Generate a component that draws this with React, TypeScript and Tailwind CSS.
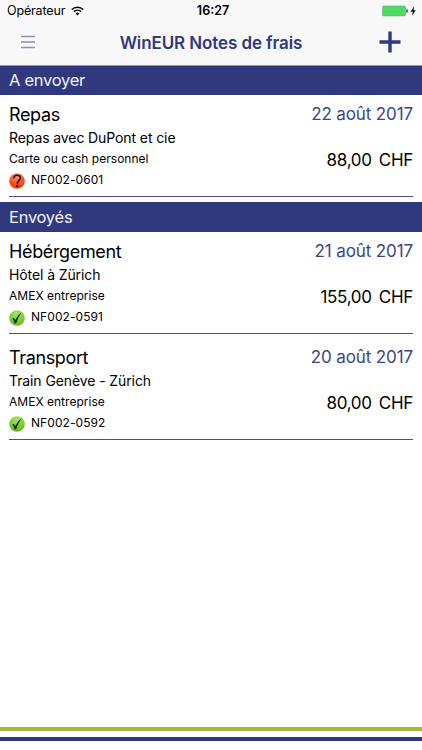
import { ReactNode } from 'react'

type ExpenseStatus = 'pending' | 'sent'

interface Expense {
  id: string
  category: string
  description: string
  payment: string
  date: string
  amount: string
  status: ExpenseStatus
}

const pendingExpenses: Expense[] = [
  {
    id: 'NF002-0601',
    category: 'Repas',
    description: 'Repas avec DuPont et cie',
    payment: 'Carte ou cash personnel',
    date: '22 août 2017',
    amount: '88,00 CHF',
    status: 'pending',
  },
]

const sentExpenses: Expense[] = [
  {
    id: 'NF002-0591',
    category: 'Hébérgement',
    description: 'Hôtel à Zürich',
    payment: 'AMEX entreprise',
    date: '21 août 2017',
    amount: '155,00 CHF',
    status: 'sent',
  },
  {
    id: 'NF002-0592',
    category: 'Transport',
    description: 'Train Genève - Zürich',
    payment: 'AMEX entreprise',
    date: '20 août 2017',
    amount: '80,00 CHF',
    status: 'sent',
  },
]

function StatusBar() {
  return (
    <div className="grid h-[22px] grid-cols-3 items-center text-[12.5px] leading-[22px] text-black">
      <div className="flex items-center gap-[6px] pl-[7px]">
        <span className="tracking-[-0.15px]">Opérateur</span>
        <svg width="13" height="10" viewBox="0 0 13 10" fill="none" stroke="#000" strokeWidth="1.6">
          <path d="M0.8 3.5a8.2 8.2 0 0 1 11.4 0" />
          <path d="M2.9 5.7a5.2 5.2 0 0 1 7.2 0" />
          <path d="M6.5 9.5 4.6 7.5a2.8 2.8 0 0 1 3.8 0z" fill="#000" stroke="none" />
        </svg>
      </div>
      <span className="pl-1 text-center font-semibold">16:27</span>
      <div className="flex items-center justify-end pr-[5px]">
        <svg width="35" height="12" viewBox="0 0 35 12">
          <rect x="0.5" y="0.9" width="23" height="10" rx="1.2" fill="#4cd964" stroke="#7aa582" strokeWidth="0.6" />
          <path d="M24.4 4.2h0.5a1 1 0 0 1 0.8 1v1.6a1 1 0 0 1-0.8 1h-0.5z" fill="#222" />
          <path d="M32.2 1.2 28.6 6.7h2.3l-1 4.1 3.9-5.6h-2.4z" fill="#000" />
        </svg>
      </div>
    </div>
  )
}

function NavBar() {
  return (
    <div className="flex h-[43px] items-center justify-between pr-[21px] pl-[21px]">
      <svg width="14" height="14" viewBox="0 0 14 14" fill="none" stroke="#8d8fbc" strokeWidth="1.4" className="-mt-[3px] mr-[8px]">
        <path d="M0 1.5h14M0 7h14M0 12.5h14" />
      </svg>
      <h1 className="mt-px text-[17px] font-semibold tracking-[-0.1px] text-[#31387e]">WinEUR Notes de frais</h1>
      <svg width="22" height="22" viewBox="0 0 22 22" fill="none" stroke="#2f3880" strokeWidth="3.4" className="-mt-[3px]">
        <path d="M11 0.5v21M0.5 11h21" />
      </svg>
    </div>
  )
}

function StatusIcon({ status }: { status: ExpenseStatus }) {
  if (status === 'pending') {
    return (
      <svg width="16" height="16" viewBox="0 0 16 16" className="mt-px">
        <defs>
          <radialGradient id="pending" cx="0.5" cy="0.2" r="0.8">
            <stop offset="0" stopColor="#ff9a68" />
            <stop offset="0.6" stopColor="#f9501f" />
            <stop offset="1" stopColor="#e23c10" />
          </radialGradient>
        </defs>
        <circle cx="8" cy="8" r="7.8" fill="url(#pending)" />
        <path d="M4.8 5.3C5 3.2 6.4 2.2 8.1 2.2c2 0 3.3 1.1 3.3 2.8C11.4 7.4 8.2 7.6 8.2 10.8" fill="none" stroke="#2c0f08" strokeWidth="1.6" />
        <rect x="7.2" y="12" width="2" height="1.9" fill="#2c0f08" />
      </svg>
    )
  }

  return (
    <svg width="16" height="16" viewBox="0 0 16 16" className="mt-px">
      <defs>
        <radialGradient id="sent" cx="0.5" cy="0.2" r="0.8">
          <stop offset="0" stopColor="#a4e36a" />
          <stop offset="0.6" stopColor="#7bcf2c" />
          <stop offset="1" stopColor="#5fb81c" />
        </radialGradient>
      </defs>
      <circle cx="8" cy="8" r="7.8" fill="url(#sent)" />
      <path d="M3.4 8.6 5 7.9 6.3 10.2C7.8 6.9 9.8 4.2 12.6 2.4 10.3 5.6 8.5 9 7.2 13.2H5.6C5.1 11.4 4.4 9.9 3.4 8.6z" fill="#10260a" />
    </svg>
  )
}

function ExpenseRow({ expense }: { expense: Expense }) {
  return (
    <div className="h-[106px] px-[9px]">
      <div className="flex h-[102px] justify-between border-b border-[#4b5190] text-black">
        <div>
          <p className="mt-[7px] text-[18px] leading-[25px] tracking-[-0.36px]">{expense.category}</p>
          <p className="text-[14px] leading-[22px] tracking-[-0.1px]">{expense.description}</p>
          <p className="text-[12px] leading-[19px] tracking-[0.02px]">{expense.payment}</p>
          <div className="flex items-center gap-[6px] text-[12px] leading-6 tracking-[0.07px]">
            <StatusIcon status={expense.status} />
            <span>{expense.id}</span>
          </div>
        </div>
        <div className="text-right">
          <p className="mt-[6px] text-[17px] leading-[26px] tracking-[-0.12px] text-[#3d4488]">{expense.date}</p>
          <p className="mt-5 text-[17px] leading-[26px] tracking-[-0.28px] [word-spacing:2.5px]">{expense.amount}</p>
        </div>
      </div>
    </div>
  )
}

function Section({ title, children }: { title: string; children: ReactNode }) {
  return (
    <section>
      <h2 className="h-[30px] bg-[#30387e] px-[9px] text-[16.5px] leading-[30px] tracking-[-0.27px] text-[#f1f2fa]">
        {title}
      </h2>
      {children}
    </section>
  )
}

export default function App() {
  return (
    <div className="flex h-[750px] w-[422px] flex-col bg-white font-['Inter',sans-serif]">
      <header className="z-10 h-[66px] border-b border-[#9594bb] bg-[#f8f8f9]">
        <StatusBar />
        <NavBar />
      </header>
      <main className="-mt-px flex flex-1 flex-col gap-px">
        <Section title="A envoyer">
          {pendingExpenses.map((expense) => (
            <ExpenseRow key={expense.id} expense={expense} />
          ))}
        </Section>
        <Section title="Envoyés">
          {sentExpenses.map((expense) => (
            <ExpenseRow key={expense.id} expense={expense} />
          ))}
        </Section>
      </main>
      <footer className="h-[23px]">
        <div className="h-1 bg-[#9fbc3b]" />
        <div className="mt-[6px] h-1 bg-[#30387e]" />
      </footer>
    </div>
  )
}
